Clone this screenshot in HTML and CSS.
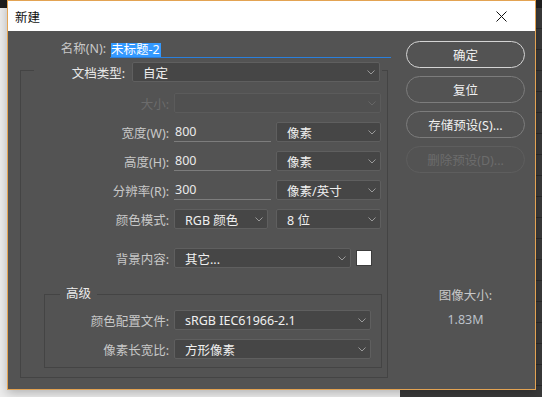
FILE: index.html
```html
<!DOCTYPE html>
<html lang="zh-CN">
<head>
    <meta charset="UTF-8">
    <title>新建</title>
    <link rel="stylesheet" href="styles.css">
</head>
<body>
    <div class="topbar"></div>
    <div class="side-panel"></div>

    <div class="dialog">
        <div class="titlebar">
            <span class="title">新建</span>
            <svg class="close" viewBox="0 0 11 11"><path d="M.5 .5 10.5 10.5M10.5 .5 .5 10.5"/></svg>
        </div>

        <div class="dialog-body">
            <div class="form-col">
                <div class="name-row">
                    <span class="name-label">名称(N):</span>
                    <div class="name-field"><span class="name-sel">未标题-2</span></div>
                </div>

                <fieldset class="group">
                    <legend class="group-head">
                        <div class="head-row">
                            <span class="head-label">文档类型:</span>
                            <div class="select w-type">自定<svg class="chev" viewBox="0 0 8 5"><path d="M.5 .5 4 4 7.5 .5"/></svg></div>
                        </div>
                    </legend>

                    <div class="row first">
                        <span class="label off">大小:</span>
                        <div class="select off w-full"><svg class="chev" viewBox="0 0 8 5"><path d="M.5 .5 4 4 7.5 .5"/></svg></div>
                    </div>
                    <div class="row">
                        <span class="label">宽度(W):</span>
                        <div class="text-field">800</div>
                        <div class="select w-unit">像素<svg class="chev" viewBox="0 0 8 5"><path d="M.5 .5 4 4 7.5 .5"/></svg></div>
                    </div>
                    <div class="row">
                        <span class="label">高度(H):</span>
                        <div class="text-field">800</div>
                        <div class="select w-unit">像素<svg class="chev" viewBox="0 0 8 5"><path d="M.5 .5 4 4 7.5 .5"/></svg></div>
                    </div>
                    <div class="row">
                        <span class="label">分辨率(R):</span>
                        <div class="text-field">300</div>
                        <div class="select w-unit">像素/英寸<svg class="chev" viewBox="0 0 8 5"><path d="M.5 .5 4 4 7.5 .5"/></svg></div>
                    </div>
                    <div class="row">
                        <span class="label">颜色模式:</span>
                        <div class="select w-mode">RGB 颜色<svg class="chev" viewBox="0 0 8 5"><path d="M.5 .5 4 4 7.5 .5"/></svg></div>
                        <div class="select w-bits">8 位<svg class="chev" viewBox="0 0 8 5"><path d="M.5 .5 4 4 7.5 .5"/></svg></div>
                    </div>
                    <div class="row spaced">
                        <span class="label">背景内容:</span>
                        <div class="select w-bg">其它...<svg class="chev" viewBox="0 0 8 5"><path d="M.5 .5 4 4 7.5 .5"/></svg></div>
                        <div class="swatch"></div>
                    </div>

                    <fieldset class="group advanced">
                        <legend class="adv-head">高级</legend>
                        <div class="row first">
                            <span class="label">颜色配置文件:</span>
                            <div class="select w-profile">sRGB IEC61966-2.1<svg class="chev" viewBox="0 0 8 5"><path d="M.5 .5 4 4 7.5 .5"/></svg></div>
                        </div>
                        <div class="row">
                            <span class="label">像素长宽比:</span>
                            <div class="select w-profile">方形像素<svg class="chev" viewBox="0 0 8 5"><path d="M.5 .5 4 4 7.5 .5"/></svg></div>
                        </div>
                    </fieldset>
                </fieldset>
            </div>

            <div class="side-col">
                <button class="btn primary">确定</button>
                <button class="btn">复位</button>
                <button class="btn">存储预设(S)...</button>
                <button class="btn" disabled>删除预设(D)...</button>

                <div class="size-info">
                    <div class="size-label">图像大小:</div>
                    <div class="size-value">1.83M</div>
                </div>
            </div>
        </div>
    </div>
</body>
</html>
```

FILE: styles.css
```css
body {
    margin: 0;
    height: 397px;
    overflow: hidden;
    background-color: #ededed;
    font-family: "Noto Sans", "Noto Sans CJK SC", sans-serif;
    font-size: 12.5px;
    color: #c8c8c8;
}
.topbar {
    position: absolute;
    left: 0;
    top: 0;
    width: 100%;
    height: 8px;
    background-color: #1f1f1f;
}
.side-panel {
    position: absolute;
    left: 400px;
    top: 8px;
    right: 0;
    bottom: 0;
    background-color: #2e2e2e;
    background-image: repeating-linear-gradient(#3a3a3a 0 20px, #2a2a2a 20px 21px);
}
.dialog {
    position: absolute;
    left: 7px;
    top: 0;
    width: 529px;
    height: 390px;
    box-sizing: border-box;
    border: 1px solid #e3a352;
    display: flex;
    flex-direction: column;
    box-shadow: 0 3px 10px rgba(0, 0, 0, 0.25);
}
.titlebar {
    height: 30px;
    flex: none;
    background-color: #fff;
    display: flex;
    align-items: center;
    padding-left: 7px;
}
.title {
    font-size: 12.5px;
    color: #111;
}
.close {
    width: 11px;
    height: 11px;
    margin-left: auto;
    margin-right: 28px;
    stroke: #111;
    stroke-width: 1;
    fill: none;
}
.dialog-body {
    flex: 1;
    background-color: #535353;
    display: flex;
    padding-top: 10px;
}
.form-col {
    width: 383px;
}

/* name */
.name-row {
    display: flex;
    align-items: flex-start;
    height: 17px;
}
.name-label {
    width: 98px;
    text-align: right;
    line-height: 15px;
}
.name-field {
    margin-left: 4px;
    width: 281px;
    height: 17px;
    box-sizing: border-box;
    border-bottom: 1px solid #2a7fdc;
    padding-left: 1px;
}
.name-sel {
    display: inline-block;
    background-color: #3399ff;
    color: #fff;
    line-height: 14px;
    height: 14px;
    padding-right: 1px;
}

/* groups */
.group {
    margin: 0 0 0 12px;
    padding: 0 6px 9px 0;
    width: 368px;
    box-sizing: border-box;
    border: 1px solid #444;
    min-inline-size: 0;
}
.group-head {
    margin-left: 13px;
    padding: 4px 2px 0;
}
.head-row {
    display: flex;
    align-items: center;
}
.head-label {
    width: 89px;
    text-align: right;
    color: #e8e8e8;
    margin-right: 7px;
}
.row {
    display: flex;
    align-items: center;
    height: 20px;
    margin-top: 9px;
}
.row.first {
    margin-top: 11px;
}
.row.spaced {
    margin-top: 19px;
}
.label {
    width: 148px;
    flex: none;
    text-align: right;
    margin-right: 5px;
}
.label.off {
    color: #6c6c6c;
}
.advanced {
    margin: 18px 0 0 23px;
    width: 338px;
    padding: 0 0 8px 0;
}
.adv-head {
    margin-left: 15px;
    padding: 0 6px;
    line-height: 16px;
    color: #ececec;
}
.advanced .row.first {
    margin-top: 8px;
}
.advanced .label {
    width: 124px;
}

/* controls */
.select {
    height: 20px;
    box-sizing: border-box;
    border: 1px solid #5f5f5f;
    border-radius: 2px;
    background-color: #464646;
    color: #f0f0f0;
    padding-left: 10px;
    display: flex;
    align-items: center;
    flex: none;
}
.select.off {
    background-color: #505050;
    border-color: #5b5b5b;
}
.chev {
    width: 8px;
    height: 5px;
    margin-left: auto;
    margin-right: 4px;
    fill: none;
    stroke: #9a9a9a;
    stroke-width: 1;
}
.select.off .chev {
    stroke: #666;
}
.w-type { width: 248px; }
.w-full { width: 207px; }
.w-unit { width: 105px; margin-left: 5px; }
.w-mode { width: 94px; }
.w-bits { width: 105px; margin-left: 8px; }
.w-bg { width: 177px; }
.w-profile { width: 197px; }
.text-field {
    width: 97px;
    height: 19px;
    box-sizing: border-box;
    border-bottom: 1px solid #7d7d7d;
    padding-left: 1px;
    color: #eaeaea;
    line-height: 17px;
    flex: none;
}
.swatch {
    width: 16px;
    height: 16px;
    box-sizing: border-box;
    margin-left: 5px;
    background-color: #fff;
    border: 1px solid #3c3c3c;
}

/* buttons */
.side-col {
    margin-left: 15px;
    width: 119px;
    display: flex;
    flex-direction: column;
}
.btn {
    height: 27px;
    margin-bottom: 8px;
    border: 1px solid #7c7c7c;
    border-radius: 14px;
    background: transparent;
    color: #f0f0f0;
    font-family: inherit;
    font-size: 12.5px;
    padding: 0;
}
.btn.primary {
    border-color: #d4d4d4;
}
.btn:disabled {
    border-color: #5e5e5e;
    color: #6c6c6c;
}
.size-info {
    margin-top: 107px;
    text-align: center;
    line-height: 16px;
}
.size-value {
    margin-top: 8px;
    color: #bcc1c9;
}
```
